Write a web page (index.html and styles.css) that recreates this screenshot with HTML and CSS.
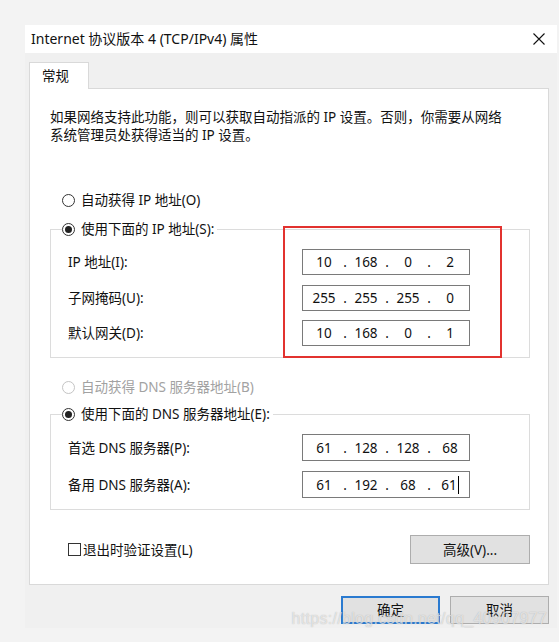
FILE: index.html
```html
<!DOCTYPE html>
<html lang="zh-CN">
<head>
  <meta charset="UTF-8">
  <meta name="viewport" content="width=device-width, initial-scale=1.0">
  <title>Internet 协议版本 4 (TCP/IPv4) 属性</title>
  <link rel="stylesheet" href="styles.css">
</head>
<body>
  <div class="window">
    <div class="titlebar">
      <span>Internet 协议版本 4 (TCP/IPv4) 属性</span>
      <svg class="close" width="12" height="12" viewBox="0 0 12 12">
        <path d="M0.5 0.5 L11.5 11.5 M11.5 0.5 L0.5 11.5" stroke="#111" stroke-width="1.1" fill="none"/>
      </svg>
    </div>

    <div class="dialog">
      <div class="tab">常规</div>

      <div class="panel">
        <p class="intro">如果网络支持此功能，则可以获取自动指派的 IP 设置。否则，你需要从网络<br>系统管理员处获得适当的 IP 设置。</p>

        <label class="choice first"><span class="radio"></span>自动获得 IP 地址(O)</label>

        <fieldset class="group">
          <legend><span class="radio checked"></span>使用下面的 IP 地址(S):</legend>
          <div class="rows">
            <span>IP 地址(I):</span>
            <div class="ip"><span class="oct">10</span><span class="dot">.</span><span class="oct">168</span><span class="dot">.</span><span class="oct">0</span><span class="dot">.</span><span class="oct">2</span></div>
            <span>子网掩码(U):</span>
            <div class="ip"><span class="oct">255</span><span class="dot">.</span><span class="oct">255</span><span class="dot">.</span><span class="oct">255</span><span class="dot">.</span><span class="oct">0</span></div>
            <span>默认网关(D):</span>
            <div class="ip"><span class="oct">10</span><span class="dot">.</span><span class="oct">168</span><span class="dot">.</span><span class="oct">0</span><span class="dot">.</span><span class="oct">1</span></div>
            <div class="mark"></div>
          </div>
        </fieldset>

        <label class="choice disabled"><span class="radio"></span>自动获得 DNS 服务器地址(B)</label>

        <fieldset class="group dns">
          <legend><span class="radio checked"></span>使用下面的 DNS 服务器地址(E):</legend>
          <div class="rows">
            <span>首选 DNS 服务器(P):</span>
            <div class="ip"><span class="oct">61</span><span class="dot">.</span><span class="oct">128</span><span class="dot">.</span><span class="oct">128</span><span class="dot">.</span><span class="oct">68</span></div>
            <span>备用 DNS 服务器(A):</span>
            <div class="ip"><span class="oct">61</span><span class="dot">.</span><span class="oct">192</span><span class="dot">.</span><span class="oct">68</span><span class="dot">.</span><span class="oct"><span class="caret">61</span></span></div>
          </div>
        </fieldset>

        <div class="options">
          <label class="check"><span class="box"></span>退出时验证设置(L)</label>
          <button class="btn wide">高级(V)...</button>
        </div>
      </div>

      <div class="actions">
        <button class="btn primary">确定</button>
        <button class="btn">取消</button>
      </div>

      <div class="watermark">https://blog.csdn.net/qq_40907977</div>
    </div>
  </div>
</body>
</html>
```

FILE: styles.css
```css
* {
  margin: 0;
  padding: 0;
  box-sizing: border-box;
}

body {
  background: #f3f3f3;
  font-family: "Noto Sans", "Noto Sans CJK SC", sans-serif;
  font-size: 13.5px;
  line-height: 18px;
  color: #111;
}

.window {
  margin: 25px 2px 0 25px;
}

.titlebar {
  height: 28px;
  background: #fff;
  display: flex;
  align-items: center;
  justify-content: space-between;
  padding: 0 12px 0 6px;
  font-size: 14px;
}

.dialog {
  position: relative;
  background: #f0f0f0;
  padding: 9px 8px 4px 4px;
}

.tab {
  position: relative;
  z-index: 1;
  width: 60px;
  height: 27px;
  margin-bottom: -1px;
  padding: 4px 0 0 12px;
  background: #fff;
  border: 1px solid #d9d9d9;
  border-bottom: none;
}

.panel {
  background: #fff;
  border: 1px solid #d9d9d9;
  padding: 19px 18px 20px 20px;
}

.choice {
  display: flex;
  align-items: center;
  gap: 6px;
  padding-left: 12px;
}

.choice.first {
  margin-top: 47px;
}

.choice.disabled {
  margin-top: 20px;
  color: #a2a2a2;
}

.choice.disabled .radio {
  border-color: #c4c4c4;
}

.radio {
  position: relative;
  width: 13px;
  height: 13px;
  border: 1px solid #333;
  border-radius: 50%;
  background: #fff;
  flex: none;
}

.radio.checked::after {
  content: "";
  position: absolute;
  left: 2px;
  top: 2px;
  width: 7px;
  height: 7px;
  border-radius: 50%;
  background: #222;
}

.group {
  margin-top: 11px;
  padding: 11px 59px 11px 17px;
  border: 1px solid #dcdcdc;
  min-width: 0;
}

.group legend {
  display: flex;
  align-items: center;
  gap: 6px;
  margin-left: -6px;
  padding-right: 3px;
}

.group.dns {
  margin-top: 9px;
}

.rows {
  position: relative;
  display: grid;
  grid-template-columns: 1fr 168px;
  align-items: center;
  row-gap: 9.5px;
}

.dns .rows {
  row-gap: 10px;
}

.ip {
  display: flex;
  align-items: center;
  height: 26px;
  padding-left: 4px;
  border: 1px solid #7a7a7a;
  background: #fff;
  color: #111;
}

.dns .ip {
  height: 27px;
}

.oct {
  width: 34px;
  text-align: center;
}

.dot {
  width: 8px;
  text-align: center;
}

.caret {
  border-right: 1px solid #000;
  padding-right: 1px;
}

.mark {
  position: absolute;
  left: 215px;
  top: -23px;
  width: 219px;
  height: 132px;
  border: 2px solid #e2322f;
}

.options {
  display: flex;
  align-items: center;
  justify-content: space-between;
  margin-top: 25px;
  padding-left: 18px;
}

.check {
  display: flex;
  align-items: center;
  gap: 2px;
}

.box {
  width: 13px;
  height: 13px;
  border: 1px solid #333;
  background: #fff;
}

.btn {
  width: 99px;
  height: 28px;
  font: inherit;
  color: #111;
  background: #e1e1e1;
  border: 1px solid #adadad;
}

.btn.wide {
  width: 120px;
  height: 29px;
}

.btn.primary {
  border: 2px solid #2a7ad0;
}

.actions {
  display: flex;
  justify-content: flex-end;
  gap: 10px;
  padding-top: 11px;
}

.watermark {
  position: absolute;
  right: 10px;
  bottom: 0;
  font-family: "Liberation Sans", sans-serif;
  font-size: 16px;
  letter-spacing: 0.3px;
  color: rgba(255, 255, 255, 0.6);
  text-shadow: 0 0 1px rgba(130, 130, 130, 0.6);
}
```
